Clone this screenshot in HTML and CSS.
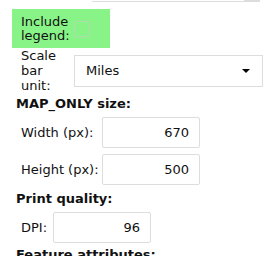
FILE: index.html
```html
<!DOCTYPE html>
<html>
<head>
	<meta charset="UTF-8">
	<title>Print options</title>
	<link rel="stylesheet" href="styles.css">
</head>
<body>
	<div class="prev-field"><span class="prev-thumb"></span></div>

	<div class="row legend-row">
		<label class="label" for="legend">Include legend:</label>
		<input type="checkbox" id="legend" class="check">
	</div>

	<div class="row unit-row">
		<label class="label unit-label" for="unit">Scale bar unit:</label>
		<div class="select" id="unit">
			<span>Miles</span>
			<span class="arrow"></span>
		</div>
	</div>

	<h4 class="section map">MAP_ONLY size:</h4>
	<div class="row field-row">
		<label class="label wide" for="width">Width (px):</label>
		<input class="num" id="width" type="text" value="670">
	</div>
	<div class="row field-row">
		<label class="label wide" for="height">Height (px):</label>
		<input class="num" id="height" type="text" value="500">
	</div>

	<h4 class="section print">Print quality:</h4>
	<div class="row field-row last">
		<label class="label short" for="dpi">DPI:</label>
		<input class="num" id="dpi" type="text" value="96">
	</div>

	<h4 class="section attrs">Feature attributes:</h4>
</body>
</html>
```

FILE: styles.css
```css
* {
	box-sizing: border-box;
}
body {
	margin: 0;
	font-family: "DejaVu Sans", sans-serif;
	font-size: 13px;
	color: #111;
	background: #fff;
	overflow: hidden;
}
.prev-field {
	margin-left: 92px;
	width: 168px;
	height: 2px;
	border-bottom: 1px solid #ddd;
	display: flex;
	justify-content: flex-end;
}
.prev-thumb {
	width: 16px;
	height: 2px;
	background: #ddd;
}
.row {
	display: flex;
	align-items: center;
}
.label {
	line-height: 14px;
}
.legend-row {
	margin: 7px 0 0 12px;
	width: 98px;
	height: 39px;
	padding-left: 9px;
	background: #88f488;
}
.legend-row .label {
	width: 53px;
}
.check {
	appearance: none;
	margin: 0;
	width: 16px;
	height: 16px;
	border: 1px solid #b0dcb0;
	border-radius: 3px;
	background: transparent;
}
.unit-row {
	padding-left: 21px;
}
.unit-label {
	width: 53px;
	line-height: 15px;
}
.select {
	width: 189px;
	height: 32px;
	border: 1px solid #ddd;
	display: flex;
	align-items: center;
	justify-content: space-between;
	padding: 0 12px 0 11px;
}
.arrow {
	width: 0;
	height: 0;
	border-left: 4px solid transparent;
	border-right: 4px solid transparent;
	border-top: 4px solid #000;
}
.section {
	margin: 4px 0 6px 16px;
	font-size: 13px;
	font-weight: bold;
	line-height: 15px;
}
.map {
	margin-top: 3px;
}
.field-row {
	padding-left: 21px;
	margin-bottom: 6px;
}
.field-row.last {
	margin-bottom: 4px;
}
.wide {
	width: 81px;
}
.short {
	width: 32px;
}
.num {
	width: 98px;
	height: 31px;
	border: 1px solid #ddd;
	border-radius: 2px;
	padding: 0 10px;
	text-align: right;
	font-family: inherit;
	font-size: 13px;
	color: #111;
}
```
